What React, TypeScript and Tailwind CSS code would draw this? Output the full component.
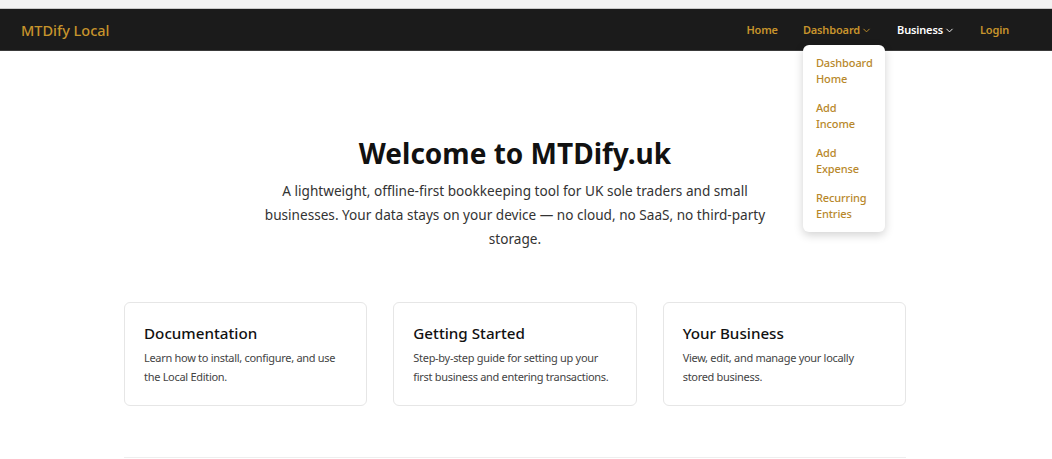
import { ChevronDown } from 'lucide-react';

const CARDS = [
  {
    title: 'Documentation',
    body: 'Learn how to install, configure, and use the Local Edition.',
  },
  {
    title: 'Getting Started',
    body: 'Step-by-step guide for setting up your first business and entering transactions.',
  },
  {
    title: 'Your Business',
    body: 'View, edit, and manage your locally stored business.',
  },
];

const DASHBOARD_LINKS = ['Dashboard Home', 'Add Income', 'Add Expense', 'Recurring Entries'];

export default function App() {
  return (
    <div className="min-h-[459px] bg-white font-['Noto_Sans',sans-serif] text-[#111]">
      {/* browser-ish top strip */}
      <div className="h-[9px] border-b border-[#c8c8c8] bg-[#f2f2f2]" />

      <nav className="relative flex h-[42px] items-center justify-between border-b border-[#3a3a3a] bg-[#1b1b1b] pl-[21px] pr-[43px] pt-[2px]">
        <span className="text-[14.5px] font-medium text-[#c7942c]">MTDify Local</span>
        <ul className="flex items-center gap-[25px] text-[11px] font-semibold tracking-[-0.15px]">
          <li className="text-[#c7942c]">Home</li>
          <li className="relative flex items-center gap-[1px] text-[#c7942c]">
            Dashboard
            <ChevronDown size={11} strokeWidth={2} />
            <div className="absolute left-0 top-[23px] z-10 w-[82px] rounded-md bg-white px-[13px] py-[10px] shadow-[0_3px_10px_rgba(0,0,0,0.18)]">
              <ul className="flex flex-col gap-[13px] text-[11px] font-medium leading-[16px] tracking-[-0.1px] text-[#b8882b]">
                {DASHBOARD_LINKS.map((l) => (
                  <li key={l}>{l}</li>
                ))}
              </ul>
            </div>
          </li>
          <li className="flex items-center gap-[1px] text-white">
            Business
            <ChevronDown size={11} strokeWidth={2} />
          </li>
          <li className="text-[#c7942c]">Login</li>
        </ul>
      </nav>

      <main className="pr-[22px]">
        <div className="mx-auto w-[782px]">
          <section className="pt-[84px] text-center">
            <h1 className="text-[28px] font-bold leading-[36px] text-[#111]">Welcome to MTDify.uk</h1>
            <p className="mx-auto mt-[8px] w-[510px] text-[13.6px] leading-[24px] text-[#333]">
              A lightweight, offline-first bookkeeping tool for UK sole traders and small
              businesses. Your data stays on your device — no cloud, no SaaS, no third-party
              storage.
            </p>
          </section>

          <section className="mt-[51px] grid grid-cols-3 gap-[26px]">
            {CARDS.map((c) => (
              <div
                key={c.title}
                className="h-[104px] rounded-md border border-[#e6e6e6] bg-white pl-[19px] pt-[19px]"
              >
                <h2 className="text-[15.2px] font-medium leading-[22px] text-[#111]">{c.title}</h2>
                <p className="mt-[4px] w-[200px] text-[11px] leading-[19px] tracking-[-0.3px] text-[#444]">
                  {c.body}
                </p>
              </div>
            ))}
          </section>

          <hr className="mt-[51px] border-t border-[#eeeeee]" />
        </div>
      </main>
    </div>
  );
}
